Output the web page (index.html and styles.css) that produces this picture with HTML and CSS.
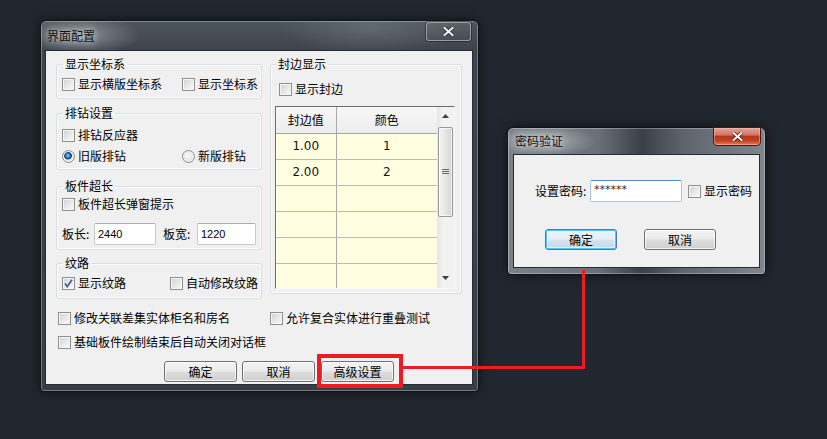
FILE: index.html
```html
<!DOCTYPE html>
<html lang="zh-CN">
<head>
<meta charset="utf-8">
<title>界面配置</title>
<link rel="stylesheet" href="styles.css">
</head>
<body>
<div class="win win-main">
  <div class="tbar">
    <span class="title">界面配置</span>
    <span class="close close-gray"><svg width="11" height="9" viewBox="0 0 11 9"><path d="M1.5 1 L9.5 8 M9.5 1 L1.5 8" stroke="#2a2f35" stroke-width="3.6" stroke-linecap="square"/><path d="M1.5 1 L9.5 8 M9.5 1 L1.5 8" stroke="#f4f4f4" stroke-width="2" stroke-linecap="square"/></svg></span>
  </div>
  <div class="client">
    <div class="top">
      <div class="leftcol">
        <fieldset class="grp g1">
          <legend>显示坐标系</legend>
          <div class="row">
            <label class="chk w120"><span class="cb"></span>显示横版坐标系</label>
            <label class="chk"><span class="cb"></span>显示坐标系</label>
          </div>
        </fieldset>
        <fieldset class="grp g2">
          <legend>排钻设置</legend>
          <div class="row"><label class="chk"><span class="cb"></span>排钻反应器</label></div>
          <div class="row r2">
            <label class="chk w120"><span class="rad on"></span>旧版排钻</label>
            <label class="chk"><span class="rad"></span>新版排钻</label>
          </div>
        </fieldset>
        <fieldset class="grp g3">
          <legend>板件超长</legend>
          <div class="row"><label class="chk"><span class="cb"></span>板件超长弹窗提示</label></div>
          <div class="row inrow">
            <span class="lbl la">板长:</span><span class="inp i1">2440</span>
            <span class="lbl lb">板宽:</span><span class="inp i2">1220</span>
          </div>
        </fieldset>
        <fieldset class="grp g4">
          <legend>纹路</legend>
          <div class="row">
            <label class="chk w108"><span class="cb"><svg width="11" height="11" viewBox="0 0 11 11"><path d="M2 5.5 L4.3 8.6 L9 1.8" fill="none" stroke="#4a5c90" stroke-width="1.7"/></svg></span>显示纹路</label>
            <label class="chk"><span class="cb"></span>自动修改纹路</label>
          </div>
        </fieldset>
      </div>
      <fieldset class="grp edge">
        <legend>封边显示</legend>
        <div class="row ebox"><label class="chk"><span class="cb"></span>显示封边</label></div>
        <div class="gridbox">
          <div class="data">
            <table>
              <tr><th class="c1">封边值</th><th class="c2">颜色</th></tr>
              <tr><td class="c1">1.00</td><td class="c2">1</td></tr>
              <tr><td class="c1">2.00</td><td class="c2">2</td></tr>
              <tr><td class="c1"></td><td class="c2"></td></tr>
              <tr><td class="c1"></td><td class="c2"></td></tr>
              <tr><td class="c1"></td><td class="c2"></td></tr>
              <tr><td class="c1"></td><td class="c2"></td></tr>
            </table>
          </div>
          <div class="sbar">
            <div class="sbtn"><svg width="7" height="4" viewBox="0 0 7 4"><path d="M0 4 L3.5 0 L7 4 Z" fill="#404040"/></svg></div>
            <div class="thumb"><svg width="7" height="6" viewBox="0 0 7 6"><path d="M0 0.5 H7 M0 2.5 H7 M0 4.5 H7" stroke="#6a6a6a" stroke-width="1"/></svg></div>
            <div class="sfill"></div>
            <div class="sbtn sdown"><svg width="7" height="4" viewBox="0 0 7 4"><path d="M0 0 H7 L3.5 4 Z" fill="#404040"/></svg></div>
          </div>
        </div>
      </fieldset>
    </div>
    <div class="opts">
      <label class="chk"><span class="cb"></span>修改关联差集实体柜名和房名</label>
      <label class="chk"><span class="cb"></span>允许复合实体进行重叠测试</label>
      <label class="chk"><span class="cb"></span>基础板件绘制结束后自动关闭对话框</label>
    </div>
    <div class="btns">
      <span class="btn">确定</span>
      <span class="btn">取消</span>
      <span class="btn">高级设置</span>
    </div>
  </div>
</div>

<div class="win win-pw">
  <div class="tbar">
    <span class="title">密码验证</span>
    <span class="close close-red"><svg width="11" height="9" viewBox="0 0 11 9"><path d="M1.5 1 L9.5 8 M9.5 1 L1.5 8" stroke="#5a1a10" stroke-width="3.6" stroke-linecap="square"/><path d="M1.5 1 L9.5 8 M9.5 1 L1.5 8" stroke="#ffffff" stroke-width="2" stroke-linecap="square"/></svg></span>
  </div>
  <div class="client pwc">
    <div class="pwrow">
      <span class="lbl">设置密码:</span>
      <span class="inp pwin">******</span>
      <label class="chk"><span class="cb"></span>显示密码</label>
    </div>
    <div class="pwbtns">
      <span class="btn def">确定</span>
      <span class="btn">取消</span>
    </div>
  </div>
</div>

<div class="hl-box"></div>
<div class="hl-h"></div>
<div class="hl-v"></div>
</body>
</html>
```

FILE: styles.css
```css
* { box-sizing: border-box; }
html, body { margin: 0; padding: 0; }
body {
  width: 827px;
  height: 439px;
  overflow: hidden;
  position: relative;
  background: #21272e;
  font-family: "Noto Sans CJK SC", "Microsoft YaHei", sans-serif;
  font-size: 12px;
  line-height: 14px;
  color: #000;
}

/* windows */
.win {
  position: absolute;
  border: 1px solid #101418;
  border-radius: 6px 6px 4px 4px;
  box-shadow: inset 0 0 0 1px rgba(255,255,255,.3), 0 0 12px rgba(0,0,0,.55);
  display: flex;
  flex-direction: column;
}
.win-main {
  left: 40px;
  top: 20px;
  width: 439px;
  height: 372px;
  padding: 0 5px 6px 4px;
  background:
    radial-gradient(ellipse 60px 20px at 40px 14px, rgba(190,196,202,.55), rgba(190,196,202,0)),
    radial-gradient(ellipse 90px 30px at 330px 6px, rgba(140,148,156,.35), rgba(140,148,156,0)),
    linear-gradient(#4d555d, #3d444c 28px, #373e46);
}
.win-pw {
  left: 507px;
  top: 127px;
  width: 259px;
  height: 148px;
  padding: 0 5px 6px 5px;
  background:
    radial-gradient(ellipse 50px 16px at 38px 13px, rgba(220,224,228,.55), rgba(220,224,228,0)),
    linear-gradient(90deg, #7b8188 0%, #6a7077 35%, #3a4048 52%, #5e646b 68%, #80868d 100%);
}

.tbar {
  height: 29px;
  display: flex;
  justify-content: space-between;
  align-items: flex-start;
  flex: none;
}
.win-pw .tbar { height: 26px; }
.title {
  margin: 8px 0 0 2px;
  line-height: 14px;
  color: #111;
  text-shadow: 0 0 6px rgba(255,255,255,.75), 0 0 12px rgba(255,255,255,.45);
}
.win-pw .title { margin-top: 6px; }

.close {
  width: 45px;
  height: 19px;
  display: flex;
  align-items: center;
  justify-content: center;
  border-radius: 3px;
}
.close-gray {
  margin: 1px 2px 0 0;
  border: 1px solid rgba(175,182,190,.75);
  box-shadow: 0 0 0 1px rgba(0,0,0,.35);
  background: linear-gradient(rgba(255,255,255,.08), rgba(255,255,255,.02));
}
.close-red {
  width: 48px;
  margin: -1px -1px 0 0;
  border: 1px solid #4a1a12;
  border-radius: 0 0 4px 4px;
  box-shadow: inset 0 0 0 1px rgba(255,200,190,.45);
  background: linear-gradient(#e0a396 0%, #d27766 40%, #b8361c 50%, #c2411f 75%, #e2805a 100%);
}

.client {
  flex: 1;
  background: #f0f0f0;
  border: 1px solid #262c33;
  display: flex;
  flex-direction: column;
  padding: 6px 10px 2px 10px;
}

.top {
  display: flex;
  gap: 8px;
  align-items: flex-start;
}
.leftcol {
  width: 206px;
  display: flex;
  flex-direction: column;
}

/* group boxes */
.grp {
  margin: 0;
  padding: 0 0 0 5px;
  border: 1px solid #d5dfe5;
  border-radius: 3px;
  box-shadow: inset 0 0 0 1px #fbfcfd;
  min-width: 0;
  display: flex;
  flex-direction: column;
}
.grp legend {
  padding: 0 2px;
  margin-left: 1px;
  line-height: 14px;
}
.g1 { height: 42px; padding-top: 4px; }
.g2 { height: 64px; margin-top: 7px; padding-top: 6px; }
.g2 .r2 { margin-top: 3px; }
.g3 { height: 71px; margin-top: 9px; padding-top: 2px; }
.g4 { height: 43px; margin-top: 6px; padding-top: 4px; }

.row {
  display: flex;
  align-items: center;
  height: 18px;
}
.chk {
  display: flex;
  align-items: center;
  gap: 3px;
  white-space: nowrap;
  line-height: 14px;
}
.w120 { width: 120px; }
.w108 { width: 108px; }

.cb {
  width: 13px;
  height: 13px;
  flex: none;
  border: 1px solid #8e8f8f;
  background: linear-gradient(135deg, #cfd1d4 0%, #ebebeb 60%, #f8f8f8 100%);
  box-shadow: inset 0 0 0 1px #f6f6f6;
  display: flex;
  align-items: center;
  justify-content: center;
}
.rad {
  width: 13px;
  height: 13px;
  flex: none;
  border-radius: 50%;
  border: 1px solid #8e8f8f;
  background: radial-gradient(circle at 45% 40%, #fbfbfb 0, #e6e6e6 55%, #cfcfcf 100%);
  box-shadow: inset 0 0 0 1px #f2f2f2;
}
.rad.on {
  background:
    radial-gradient(circle at 45% 42%, #a9e2ff 0, #3a8fd8 1.6px, #14559b 3px, #0f3f74 3.6px, rgba(15,63,116,0) 4.2px),
    radial-gradient(circle at 45% 40%, #fbfbfb 0, #e6e6e6 55%, #cfcfcf 100%);
}

/* inputs */
.inrow { height: 22px; margin-top: 10px; }
.lbl { white-space: nowrap; }
.la { width: 32px; }
.lb { width: 34px; margin-left: 7px; }
.inp {
  height: 22px;
  background: #fff;
  border: 1px solid #c5c8cd;
  border-top-color: #abadb3;
  border-radius: 2px;
  font-family: "Liberation Sans", Arial, sans-serif;
  font-size: 11px;
  line-height: 20px;
  padding-left: 3px;
  color: #000;
}
.i1 { width: 62px; }
.i2 { width: 59px; }

/* edge group */
.edge {
  width: 192px;
  height: 237px;
  padding: 9px 0 0 4px;
}
.ebox { margin-left: 4px; }
.gridbox {
  margin-top: 8px;
  width: 180px;
  height: 183px;
  border: 1px solid;
  border-color: #6e6e6e #f8f8f8 #f8f8f8 #6e6e6e;
  box-shadow: inset 1px 1px 0 #a0a0a0;
  display: flex;
  overflow: hidden;
}
.data {
  width: 161px;
  height: 181px;
  overflow: hidden;
  background: #fffee0;
}
.data table {
  border-collapse: collapse;
  table-layout: fixed;
  width: 161px;
}
.data th, .data td {
  height: 26px;
  padding: 0;
  text-align: center;
  border-bottom: 1px solid #b9b9b9;
  font-weight: normal;
}
.data th {
  background: linear-gradient(#f7f7f7, #ececec);
  border-bottom-color: #a5a5a5;
  line-height: 14px;
}
.data td {
  font-family: "DejaVu Sans", sans-serif;
  font-size: 12px;
  color: #141414;
  background: #fffee0;
}
.c1 { width: 60px; border-right: 1px solid #a9a9a9; }
.c2 { width: 101px; }

.sbar {
  width: 17px;
  height: 181px;
  background: linear-gradient(90deg, #e6e6e6, #f3f3f3 40%, #f0f0f0);
  display: flex;
  flex-direction: column;
  align-items: center;
}
.sbtn {
  height: 17px;
  width: 17px;
  display: flex;
  align-items: center;
  justify-content: center;
  flex: none;
}
.sdown { margin-bottom: 2px; }
.thumb {
  margin-top: 3px;
  width: 15px;
  height: 90px;
  border: 1px solid #999;
  border-radius: 2px;
  background: linear-gradient(90deg, #f4f4f4, #e8e8e8 45%, #d4d4d4);
  box-shadow: inset 0 0 0 1px rgba(255,255,255,.7);
  display: flex;
  align-items: center;
  justify-content: center;
  flex: none;
}
.sfill { flex: 1; }

/* bottom options */
.opts {
  margin: 10px 0 0 2px;
  display: grid;
  grid-template-columns: 212px auto;
  grid-auto-rows: 18px;
  row-gap: 6px;
}
.btns {
  display: flex;
  margin: 10px 0 0 108px;
  gap: 5px;
}
.btns .btn:nth-child(3) { margin-left: 1px; }

.btn {
  width: 73px;
  height: 21px;
  border: 1px solid #707070;
  border-radius: 3px;
  background: linear-gradient(#f3f3f3 0%, #ebebeb 48%, #dddddd 52%, #cfcfcf 100%);
  box-shadow: inset 0 0 0 1px rgba(255,255,255,.75);
  display: flex;
  align-items: center;
  justify-content: center;
  line-height: 14px;
  flex: none;
}
.btn.def {
  border-color: #3c7fb1;
  box-shadow: inset 0 0 0 1px #4cc7f0, inset 0 0 0 2px rgba(255,255,255,.5);
  background: linear-gradient(#eef5fb 0%, #e4eef7 48%, #d6e3ee 52%, #c9d8e5 100%);
}

/* password dialog */
.pwc { padding: 25px 0 0 21px; }
.pwrow {
  display: flex;
  align-items: center;
  height: 22px;
}
.pwrow .lbl { width: 55px; }
.pwin {
  width: 92px;
  border-color: #a6c8e6;
  border-top-color: #4d8cc7;
  font-family: "DejaVu Sans", sans-serif;
  font-size: 11px;
  line-height: 18px;
  color: #3b2a22;
  margin-right: 6px;
}
.pwbtns {
  display: flex;
  gap: 27px;
  margin: 27px 0 0 10px;
}
.pwbtns .btn { width: 72px; }

/* red highlight overlay */
.hl-box {
  position: absolute;
  left: 317px;
  top: 354px;
  width: 86px;
  height: 34px;
  border: 4px solid #ec1c24;
}
.hl-h {
  position: absolute;
  left: 403px;
  top: 366px;
  width: 182px;
  height: 3px;
  background: #ec1c24;
}
.hl-v {
  position: absolute;
  left: 582px;
  top: 270px;
  width: 3px;
  height: 99px;
  background: #ec1c24;
}
```
